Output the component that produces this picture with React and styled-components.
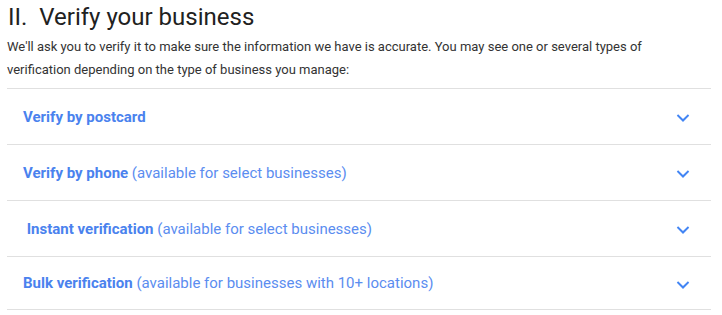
import React from 'react'
import styled, { createGlobalStyle } from 'styled-components'

const Global = createGlobalStyle`
  body {
    margin: 0;
    background: #fff;
    font-family: Roboto, "Liberation Sans", Arial, sans-serif;
  }
`

const Page = styled.div`
  width: 722px;
  padding: 0 11px 0 7px;
  box-sizing: border-box;
`

const Title = styled.h2`
  margin: 0;
  padding: 2px 0 0 1px;
  font-size: 24px;
  font-weight: 400;
  line-height: 30px;
  color: #212121;
  white-space: pre;
`

const Intro = styled.p`
  margin: 3px 0 0 0;
  padding-bottom: 7px;
  font-size: 13px;
  line-height: 23px;
  color: #333;
  border-bottom: 1px solid #e0e0e0;
`

const Row = styled.div`
  display: flex;
  align-items: center;
  justify-content: space-between;
  height: ${props => (props.last ? '53px' : '56px')};
  padding: 0 16px;
  box-sizing: border-box;
  border-bottom: 1px solid #e0e0e0;
  cursor: pointer;
`

const Label = styled.span`
  font-size: 15px;
  color: #5b8df0;
  white-space: pre;

  b {
    font-weight: 700;
    color: #4a82ee;
  }
`

const Icon = styled.svg`
  margin-top: 3px;
  flex-shrink: 0;
`

const Chevron = () => (
  <Icon width="24" height="24" viewBox="0 0 24 24" fill="#4285f4">
    <path d="M16.9 8.3L12 13.1 7.1 8.3 5.8 9.8l6.2 6.1 6.2-6.1z" />
  </Icon>
)

const items = [
  { title: 'Verify by postcard' },
  { title: 'Verify by phone', note: '(available for select businesses)' },
  { title: ' Instant verification', note: '(available for select businesses)' },
  { title: 'Bulk verification', note: '(available for businesses with 10+ locations)' },
]

const App = () => {
  return (
    <Page>
      <Global />
      <Title>II.  Verify your business</Title>
      <Intro>
        We'll ask you to verify it to make sure the information we have is accurate. You may see one or several types of
        <br />
        verification depending on the type of business you manage:
      </Intro>
      {items.map((it, i) => (
        <Row key={it.title} last={i === items.length - 1}>
          <Label>
            <b>{it.title}</b>
            {it.note ? ' ' + it.note : ''}
          </Label>
          <Chevron />
        </Row>
      ))}
    </Page>
  )
}

export default App
